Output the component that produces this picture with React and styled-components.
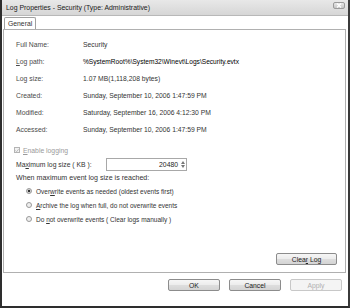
import React from "react";
import styled, { createGlobalStyle } from "styled-components";

const Global = createGlobalStyle`
  html, body { margin: 0; padding: 0; background: #fff; }
  body { font-family: "Liberation Sans", Arial, sans-serif; }
  * { box-sizing: border-box; }
`;

const Window = styled.div`
  width: 350px;
  height: 308px;
  background: #fff;
  border-left: 2px solid #2e2e2e;
  border-right: 2px solid #3a3a3a;
  border-bottom: 2px solid #2e2e2e;
  display: flex;
  flex-direction: column;
  font-size: 6.8px;
  color: #222;
`;

const TitleBar = styled.div`
  height: 16px;
  flex: none;
  display: flex;
  align-items: center;
  justify-content: space-between;
  padding: 0 3px 0 4px;
  background: linear-gradient(#e8e8e8, #d6d6d6);
  border-bottom: 1px solid #b8b8b8;
  font-size: 6.9px;
  color: #1a1a1a;
`;

const CloseBtn = styled.div`
  width: 12px;
  height: 7px;
  border: 1px solid #9a9a9a;
  border-radius: 2px;
  background: linear-gradient(#e8e8e8, #c4c4c4);
  display: flex;
  align-items: center;
  justify-content: center;
  margin-top: -5px;
`;

const Body = styled.div`
  flex: 1;
  display: flex;
  flex-direction: column;
  padding: 1px 1px 0 1px;
`;

const TabStrip = styled.div`
  display: flex;
  height: 12px;
  padding-left: 1px;
`;

const Tab = styled.div`
  height: 12px;
  padding: 0 3px;
  border: 1px solid #a0a0a0;
  border-bottom: none;
  border-radius: 2px 2px 0 0;
  background: #fff;
  display: flex;
  align-items: center;
  font-size: 6.8px;
  color: #333;
  position: relative;
  margin-bottom: -1px;
  z-index: 1;
`;

const Panel = styled.div`
  width: 343px;
  height: 244px;
  border: 1px solid #b0b0b0;
  display: flex;
  flex-direction: column;
  padding: 6px 8px 7px 12px;
`;

const InfoRow = styled.div`
  height: 17px;
  display: flex;
  align-items: center;
`;

const Label = styled.div`
  width: 67px;
  flex: none;
  color: #4a4a4a;
`;

const Value = styled.div`
  color: ${(p) => (p.$strong ? "#000" : "#333")};
  font-size: ${(p) => (p.$strong ? "6.6px" : "6.75px")};
  white-space: nowrap;
`;

const U = styled.span`
  text-decoration: underline;
`;

const CheckRow = styled.div`
  height: 14px;
  display: flex;
  align-items: center;
  margin-top: 5px;
  margin-left: -2px;
  gap: 3px;
  color: #9a9a9a;
`;

const CheckBox = styled.div`
  width: 6px;
  height: 6px;
  border: 1px solid #b4b4b4;
  background: #f2f2f2;
  display: flex;
  align-items: center;
  justify-content: center;
`;

const SizeRow = styled.div`
  height: 14px;
  display: flex;
  align-items: center;
  color: #333;
`;

const SizeLabel = styled.div`
  width: 90px;
`;

const SpinBox = styled.div`
  width: 81px;
  height: 13px;
  border: 1px solid #a8a8a8;
  display: flex;
  align-items: center;
  background: #fff;
`;

const SpinValue = styled.div`
  flex: 1;
  text-align: right;
  padding-right: 1px;
  color: #222;
`;

const Spinner = styled.div`
  width: 7px;
  height: 11px;
  display: flex;
  flex-direction: column;
  align-items: center;
  justify-content: center;
  gap: 1px;
`;

const Text = styled.div`
  height: 13px;
  display: flex;
  align-items: center;
  color: #333;
  font-size: 7.1px;
`;

const RadioRow = styled.div`
  height: 14px;
  display: flex;
  align-items: center;
  gap: 4px;
  padding-left: 10px;
  color: #333;
  font-size: 6.5px;
`;

const Radio = styled.div`
  width: 6px;
  height: 6px;
  border-radius: 50%;
  border: 1px solid #9a9a9a;
  background: ${(p) => (p.$on ? "radial-gradient(circle, #333 0 1.2px, #d8d8d8 1.6px)" : "#eeeeee")};
`;

const Spacer = styled.div`
  flex: 1;
`;

const RightRow = styled.div`
  display: flex;
  justify-content: flex-end;
  gap: 9px;
`;

const Button = styled.div`
  width: ${(p) => p.$w}px;
  height: 12px;
  border: 1px solid ${(p) => (p.$disabled ? "#c8c8c8" : "#8c8c8c")};
  border-radius: 2px;
  background: ${(p) => (p.$disabled ? "#f4f4f4" : "linear-gradient(#f6f6f6 0%, #ececec 50%, #dedede 51%, #d4d4d4 100%)")};
  color: ${(p) => (p.$disabled ? "#b0b0b0" : "#222")};
  display: flex;
  align-items: center;
  justify-content: center;
  font-size: 6.8px;
  white-space: pre;
`;

const Footer = styled(RightRow)`
  padding: 6px 5px 0 0;
`;

export default function App() {
  const info = [
    ["Full Name:", "Security"],
    [<><U>L</U>og path:</>, "%SystemRoot%\\System32\\Winevt\\Logs\\Security.evtx", true],
    ["Log size:", "1.07 MB(1,118,208 bytes)"],
    ["Created:", "Sunday, September 10, 2006 1:47:59 PM"],
    ["Modified:", "Saturday, September 16, 2006 4:12:30 PM"],
    ["Accessed:", "Sunday, September 10, 2006 1:47:59 PM"],
  ];
  return (
    <>
      <Global />
      <Window>
        <TitleBar>
          <span>Log Properties - Security (Type: Administrative)</span>
          <CloseBtn>
            <svg width="6" height="5" viewBox="0 0 6 5">
              <path d="M1 0.5 L5 4.5 M5 0.5 L1 4.5" stroke="#fff" strokeWidth="1.2" />
            </svg>
          </CloseBtn>
        </TitleBar>
        <Body>
          <TabStrip>
            <Tab>General</Tab>
          </TabStrip>
          <Panel>
            {info.map(([l, v, s], i) => (
              <InfoRow key={i}>
                <Label>{l}</Label>
                <Value $strong={s}>{v}</Value>
              </InfoRow>
            ))}
            <CheckRow>
              <CheckBox>
                <svg width="5" height="5" viewBox="0 0 5 5">
                  <path d="M0.5 2.5 L2 4 L4.5 0.8" stroke="#a8a8a8" strokeWidth="0.9" fill="none" />
                </svg>
              </CheckBox>
              <span><U>E</U>nable logging</span>
            </CheckRow>
            <SizeRow>
              <SizeLabel>Ma<U>x</U>imum log size ( KB ):</SizeLabel>
              <SpinBox>
                <SpinValue>20480</SpinValue>
                <Spinner>
                  <svg width="4" height="3" viewBox="0 0 4 3"><path d="M0 3 L2 0 L4 3 Z" fill="#777" /></svg>
                  <svg width="4" height="3" viewBox="0 0 4 3"><path d="M0 0 L2 3 L4 0 Z" fill="#777" /></svg>
                </Spinner>
              </SpinBox>
            </SizeRow>
            <Text>When maximum event log size is reached:</Text>
            <RadioRow>
              <Radio $on />
              <span>Over<U>w</U>rite events as needed (oldest events first)</span>
            </RadioRow>
            <RadioRow>
              <Radio />
              <span><U>A</U>rchive the log when full, do not overwrite events</span>
            </RadioRow>
            <RadioRow>
              <Radio />
              <span>Do <U>n</U>ot overwrite events ( Clear logs manually )</span>
            </RadioRow>
            <Spacer />
            <RightRow>
              <Button $w={61}>Clea<U>r</U>{" Log"}</Button>
            </RightRow>
          </Panel>
          <Footer>
            <Button $w={52}>OK</Button>
            <Button $w={52}>Cancel</Button>
            <Button $w={52} $disabled>Apply</Button>
          </Footer>
        </Body>
      </Window>
    </>
  );
}
